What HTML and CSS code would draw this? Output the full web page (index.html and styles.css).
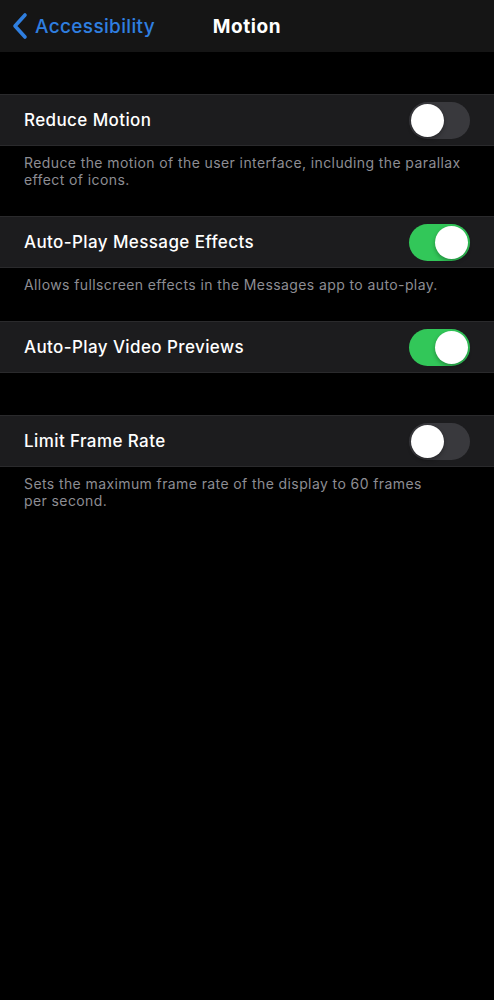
FILE: index.html
```html
<!DOCTYPE html>
<html lang="en">

<head>
    <meta charset="UTF-8">
    <meta name="viewport" content="width=device-width, initial-scale=1.0">
    <title>Motion</title>
    <link rel="stylesheet" href="styles.css">
</head>

<body>
    <div class="navbar">
        <a class="back" href="#">
            <svg class="chevron" width="16" height="28" viewBox="0 0 16 28">
                <path d="M13 3 L3 14 L13 25" fill="none" stroke="#2f7fe0" stroke-width="3.6" stroke-linecap="round" stroke-linejoin="round"/>
            </svg>
            <span>Accessibility</span>
        </a>
        <h1 class="title">Motion</h1>
    </div>

    <div class="group">
        <div class="row">
            <span class="label">Reduce Motion</span>
            <span class="switch"></span>
        </div>
        <p class="footer">Reduce the motion of the user interface, including the parallax effect of icons.</p>
    </div>

    <div class="group no-top">
        <div class="row">
            <span class="label">Auto-Play Message Effects</span>
            <span class="switch on"></span>
        </div>
        <p class="footer">Allows fullscreen effects in the Messages app to auto-play.</p>
    </div>

    <div class="group no-top">
        <div class="row">
            <span class="label">Auto-Play Video Previews</span>
            <span class="switch on"></span>
        </div>
    </div>

    <div class="group">
        <div class="row">
            <span class="label">Limit Frame Rate</span>
            <span class="switch"></span>
        </div>
        <p class="footer">Sets the maximum frame rate of the display to 60 frames per&nbsp;second.</p>
    </div>
</body>

</html>
```

FILE: styles.css
```css
body {
    margin: 0;
    background: #000;
    color: #fff;
    font-family: Inter, "Noto Sans", Arial, sans-serif;
    min-height: 100vh;
}

.navbar {
    position: relative;
    height: 52px;
    background: #151515;
    display: flex;
    align-items: center;
    justify-content: center;
}

.back {
    position: absolute;
    left: 12px;
    top: 12px;
    display: flex;
    align-items: center;
    gap: 7px;
    color: #2f7fe0;
    text-decoration: none;
    font-size: 19px;
    font-weight: 500;
    letter-spacing: 0.35px;
}

.chevron {
    display: block;
}

.title {
    margin: 0;
    font-size: 19px;
    font-weight: 700;
    letter-spacing: 0.6px;
}

.group {
    padding-top: 42px;
}

.group.no-top {
    padding-top: 0;
}

.row {
    height: 50px;
    background: #1c1c1e;
    border-top: 1px solid #2a2a2c;
    border-bottom: 1px solid #2a2a2c;
    display: flex;
    align-items: center;
    justify-content: space-between;
    padding: 0 24px;
}

.label {
    font-size: 17px;
    font-weight: 500;
    letter-spacing: 0.4px;
}

.switch {
    position: relative;
    width: 61px;
    height: 37px;
    border-radius: 19px;
    background: #39393d;
}

.switch::after {
    content: "";
    position: absolute;
    left: 2px;
    top: 2px;
    width: 33px;
    height: 33px;
    border-radius: 50%;
    background: #fff;
    box-shadow: 0 2px 4px rgba(0, 0, 0, 0.3);
}

.switch.on {
    background: #32c759;
}

.switch.on::after {
    left: 26px;
}

.footer {
    margin: 0;
    padding: 8px 24px 28px;
    font-size: 14px;
    line-height: 17px;
    color: #8d8d93;
    letter-spacing: 0.4px;
}
```
